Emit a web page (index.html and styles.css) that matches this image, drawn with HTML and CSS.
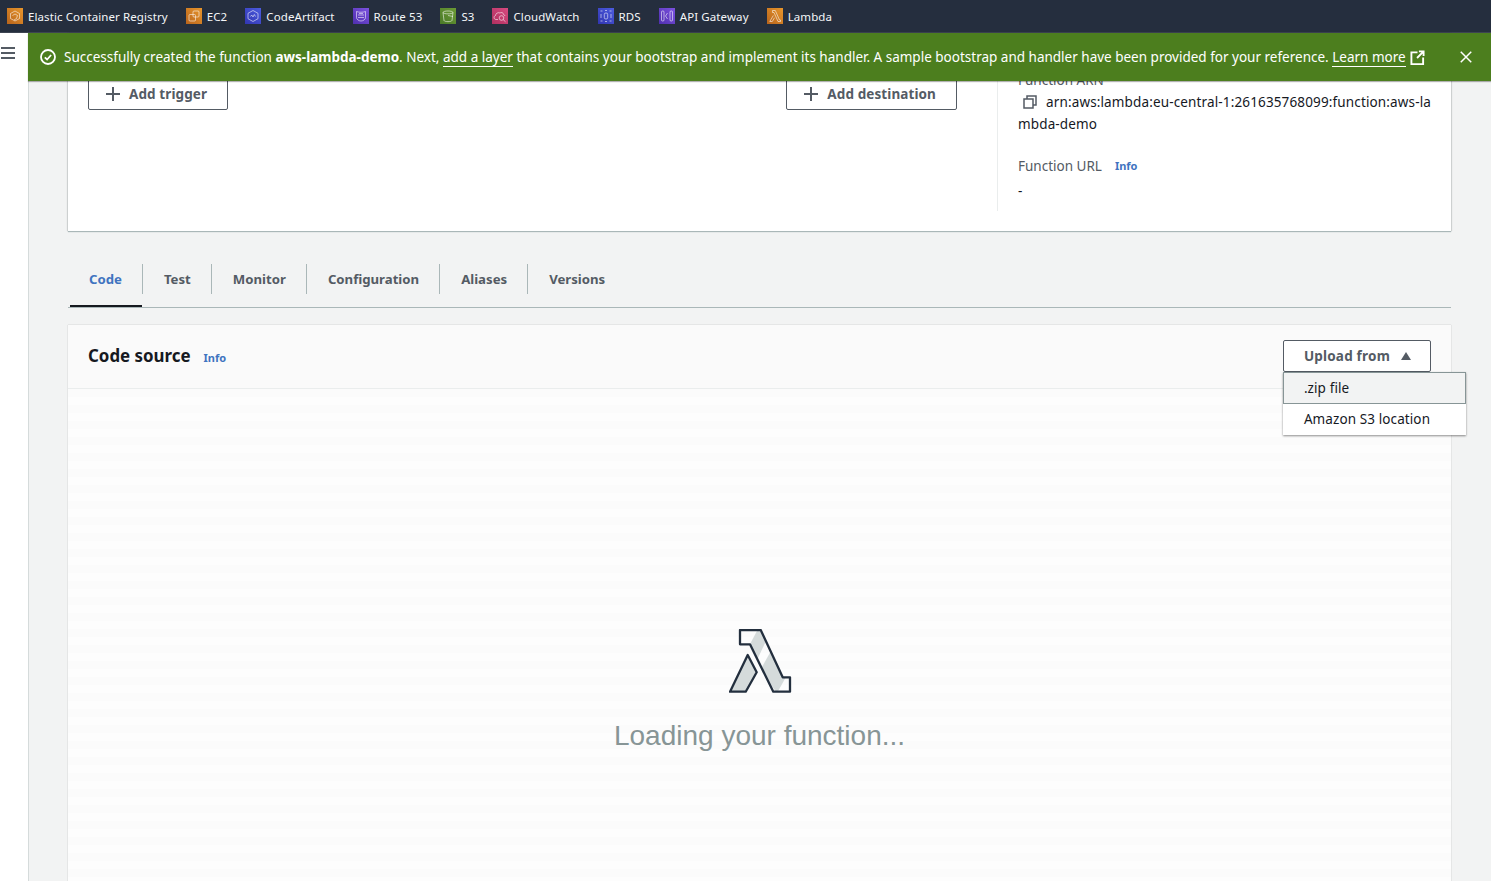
FILE: index.html
```html
<!DOCTYPE html>
<html lang="en">
<head>
<meta charset="utf-8">
<title>Lambda</title>
<link rel="stylesheet" href="styles.css">
</head>
<body>
<nav class="topnav">
  <a class="fav"><span class="ico orange"><svg viewBox="0 0 16 16"><path d="M8 3l4.500 2.500v5L8 13l-4.500-2.500v-5z"/><path d="M5.500 7.500L8 6l2.500 1.500-1 3L7 12"/></svg></span>Elastic Container Registry</a>
  <a class="fav"><span class="ico orange"><svg viewBox="0 0 16 16"><rect x="7" y="3" width="6" height="6" rx="1"/><rect x="3" y="6.500" width="6.500" height="6.500" rx="1"/></svg></span>EC2</a>
  <a class="fav"><span class="ico blue"><svg viewBox="0 0 16 16"><path d="M8 2.500l5 2.800v5.400l-5 2.800-5-2.800V5.300z"/><path d="M5.500 8.500l1.200-1.500 1.300 2 1.300-2.500 1.200 2"/></svg></span>CodeArtifact</a>
  <a class="fav"><span class="ico purple"><svg viewBox="0 0 16 16"><path d="M3.500 3.500c2.500 1 6.500 1 9 0v6c0 2-2.500 3.500-4.500 3.500s-4.500-1.500-4.500-3.500z"/><path d="M5 7h6M5 9.500h6M6 5.500h4"/></svg></span>Route 53</a>
  <a class="fav"><span class="ico green"><svg viewBox="0 0 16 16"><path d="M3 4.500c0-2 10-2 10 0l-1 8c-.500 1.500-7.500 1.500-8 0z"/><path d="M3 4.500c1 1.800 9 1.800 10 0M8 7.500l5 1"/></svg></span>S3</a>
  <a class="fav"><span class="ico pink"><svg viewBox="0 0 16 16"><path d="M6 11.500H4c-2.500 0-2.500-3.500-.5-4 0-2 2.500-3.500 4.500-2.500 1-1 3.500-.5 3.500 1.500 1 .300 1.500 1 1.500 1.500"/><circle cx="9.500" cy="10" r="2.300"/><path d="M11.200 11.700l2.300 2"/></svg></span>CloudWatch</a>
  <a class="fav"><span class="ico blue"><svg viewBox="0 0 16 16"><rect x="6.300" y="5" width="3.400" height="6" rx="1.500"/><path d="M2.500 3h2M2.500 13h2M11.500 3h2M11.500 13h2M3 6v4M13 6v4M7 2.500h2M7 13.500h2"/></svg></span>RDS</a>
  <a class="fav"><span class="ico purple"><svg viewBox="0 0 16 16"><rect x="2.500" y="3" width="2.500" height="10" rx="1"/><rect x="11" y="3" width="2.500" height="10" rx="1"/><path d="M8.500 5L6.500 8l2 3"/></svg></span>API Gateway</a>
  <a class="fav"><span class="ico orange"><svg viewBox="0 0 16 16"><path d="M5.500 2.500h2.800l4.200 9.500h1v1.500h-2.500L7 4.500H5.500z"/><path d="M6.300 7.500L2.800 13.500h2.500l2.200-3.800"/></svg></span>Lambda</a>
</nav>

<div class="shell">
  <aside class="rail">
    <button class="burger" aria-label="Open menu"><i></i><i></i><i></i></button>
  </aside>
  <main class="main">
    <div class="flash">
      <svg class="flash-ok" viewBox="0 0 16 16"><circle cx="8" cy="8" r="7"/><path d="M4.800 8.300l2.300 2.200 4-4.500"/></svg>
      <p class="flash-text">Successfully created the function <b>aws-lambda-demo</b>. Next, <a>add a layer</a> that contains your bootstrap and implement its handler. A sample bootstrap and handler have been provided for your reference. <a>Learn more</a></p>
      <svg class="flash-ext" viewBox="0 0 16 16"><path d="M8 2.500H1.500V15H14V8"/><path d="M9.500 1.500h5v5M14.500 1.500L7.500 8.500"/></svg>
      <svg class="flash-close" viewBox="0 0 16 16"><path d="M2 2l12 12M14 2L2 14"/></svg>
    </div>

    <section class="overview">
      <div class="diagram">
        <button class="btn"><svg class="plus" viewBox="0 0 14 14"><path d="M7 0v14M0 7h14"/></svg>Add trigger</button>
        <button class="btn"><svg class="plus" viewBox="0 0 14 14"><path d="M7 0v14M0 7h14"/></svg>Add destination</button>
      </div>
      <div class="meta">
        <div class="meta-label">Function ARN</div>
        <div class="arn"><svg class="copy" viewBox="0 0 14 14"><path d="M1 4h9v9H1z"/><path d="M4 4V1h9v9h-3"/></svg>arn:aws:lambda:eu-central-1:261635768099:function:aws-lambda-demo</div>
        <div class="meta-label url">Function URL <a class="info">Info</a></div>
        <div class="meta-value">-</div>
      </div>
    </section>

    <div class="tabs">
      <a class="tab active">Code</a>
      <a class="tab">Test</a>
      <a class="tab">Monitor</a>
      <a class="tab">Configuration</a>
      <a class="tab">Aliases</a>
      <a class="tab">Versions</a>
    </div>

    <section class="panel">
      <header class="panel-head">
        <h2 class="panel-title">Code source</h2>
        <a class="info">Info</a>
        <div class="upload">
          <button class="btn upload-btn">Upload from<svg class="caret" viewBox="0 0 10 8"><path d="M5 0l5 8H0z"/></svg></button>
          <ul class="menu">
            <li class="menu-item hover">.zip file</li>
            <li class="menu-item">Amazon S3 location</li>
          </ul>
        </div>
      </header>
      <div class="panel-body">
        <svg class="lambda" viewBox="0 0 64 64">
          <defs>
            <clipPath id="lam-a"><path d="M11 1h20.700l22 47.300H61v14.400H44.300L21 15.300H11z"/></clipPath>
            <clipPath id="lam-b"><path d="M18.700 26l9 17.300-11 19.400H1z"/></clipPath>
          </defs>
          <g clip-path="url(#lam-a)" class="lam-fill">
            <path d="M20 17L29 0h6l3 10-10 21z"/>
            <path d="M33 38l10-18 14 28-9 16-6-8z"/>
          </g>
          <g clip-path="url(#lam-b)" class="lam-fill">
            <path d="M0 64L20 22l12 16-17 26z"/>
          </g>
          <path class="lam-line" d="M11 1h20.700l22 47.300H61v14.400H44.300L21 15.300H11z"/>
          <path class="lam-line" d="M18.700 26l9 17.300-11 19.400H1z"/>
        </svg>
        <p class="loading">Loading your function...</p>
      </div>
    </section>
  </main>
</div>
</body>
</html>
```
FILE: styles.css
```css
* { box-sizing: border-box; }
html, body { margin: 0; height: 881px; overflow: hidden; }
body { font-family: "Noto Sans", sans-serif; font-size: 14px; color: #16191f; background: #f2f3f3; }

.topnav { height: 33px; background: #252e3e; display: flex; align-items: center; padding: 0 0 0 7px; gap: 18px; border-bottom: 1px solid #3d4452; }
.fav { display: flex; align-items: center; gap: 5px; font-size: 11.500px; letter-spacing: .1px; color: #f4f6f8; white-space: nowrap; }
.ico { width: 16px; height: 16px; display: block; }
.ico svg { display: block; width: 16px; height: 16px; fill: none; stroke: rgba(255,255,255,.7); stroke-width: .8; }
.orange { background: linear-gradient(45deg, #b8641c, #e8962c); }
.blue { background: linear-gradient(45deg, #3135b0, #4c5ce0); }
.purple { background: linear-gradient(45deg, #4f2fae, #7c52e0); }
.green { background: linear-gradient(45deg, #4a7a28, #6c9a35); }
.pink { background: linear-gradient(45deg, #b0305f, #d84a80); }

.shell { display: flex; height: 848px; }
.rail { width: 29px; flex: none; background: #fff; border-right: 1px solid #d5dbdb; }
.burger { display: flex; flex-direction: column; gap: 3px; width: 14px; margin: 14px 0 0 1px; padding: 0; border: 0; background: none; }
.burger i { display: block; height: 2px; background: #545b64; }

.main { position: relative; flex: 1; padding: 0 40px 0 39px; min-width: 0; }
.flash { position: absolute; z-index: 3; top: 0; left: -1px; right: 0; height: 48px; background: #4c7e1e; color: #fff; display: flex; align-items: center; padding-left: 12px; box-shadow: 0 1px 1px rgba(0,0,0,.3); }
.flash-ok { width: 16px; height: 16px; flex: none; fill: none; stroke: #fff; stroke-width: 1.800; margin-right: 8px; }
.flash-text { margin: 0; font-size: 13.500px; white-space: nowrap; }
.flash-text a { border-bottom: 1px solid #fff; }
.flash-ext { width: 15px; height: 15px; flex: none; fill: none; stroke: #fff; stroke-width: 2; margin-left: 4px; }
.flash-close { width: 14px; height: 14px; flex: none; fill: none; stroke: #fff; stroke-width: 1.700; margin-left: 34px; }

.overview { display: flex; height: 198px; background: #fff; box-shadow: 0 1px 1px #aab7b8, 1px 0 1px rgba(0,0,0,.12), -1px 0 1px rgba(0,0,0,.12); }
.diagram { flex: none; width: 929px; display: flex; justify-content: space-between; align-items: flex-start; padding: 45px 40px 0 20px; }
.btn { display: inline-flex; align-items: center; height: 32px; padding: 0 20px 0 17px; background: #fff; border: 1px solid #545b64; border-radius: 2px; font: 700 13.500px "Noto Sans", sans-serif; letter-spacing: .1px; color: #545b64; white-space: nowrap; }
.plus { width: 14px; height: 14px; flex: none; fill: none; stroke: #545b64; stroke-width: 2; margin-right: 9px; }
.meta { flex: 1; height: 178px; border-left: 1px solid #eaeded; padding: 37px 15px 0 20px; font-size: 13.500px; min-width: 0; }
.meta-label { color: #545b64; line-height: 20px; }
.url { margin-top: 21px; display: flex; align-items: center; gap: 13px; }
.arn { line-height: 22px; margin-top: 1px; word-break: break-all; letter-spacing: .14px; }
.copy { width: 14px; height: 14px; fill: none; stroke: #545b64; stroke-width: 1.500; margin: 0 9px -2px 5px; }
.meta-value { margin-top: 5px; line-height: 20px; }
.info { color: #3f74c0; font-size: 11px; font-weight: 700; }

.tabs { display: flex; height: 43px; margin-top: 33px; padding-left: 2px; border-bottom: 1px solid #aab7b8; box-sizing: content-box; }
.tab { display: flex; align-items: center; position: relative; height: 30px; padding: 0 20px 0 21px; font-size: 13.200px; font-weight: 700; color: #545b64; border-left: 1px solid #aab7b8; }
.tab:first-child { border-left: 0; padding: 0 20px 0 19px; }
.tab.active { color: #3f74c0; }
.tab.active::after { content: ""; position: absolute; left: 0; right: 0; top: 41px; height: 2px; background: #16191f; }

.panel { margin-top: 17px; background: #fff; box-shadow: 0 0 1px rgba(0,0,0,.3); height: 600px; }
.panel-head { height: 64px; display: flex; align-items: center; padding: 0 20px 1px; background: #fafafa; border-bottom: 1px solid #eaeded; position: relative; }
.panel-title { margin: 0 13px 1px 0; font-size: 16.900px; font-weight: 700; color: #16191f; line-height: 22px; }
.panel-head .info { margin-top: 2px; }
.upload { margin-left: auto; position: relative; }
.upload-btn { padding: 0 19px 0 20px; height: 32px; letter-spacing: .2px; }
.caret { width: 10px; height: 8px; fill: #545b64; margin-left: 11px; }
.menu { position: absolute; z-index: 2; top: 32px; left: 0; width: 183px; margin: 0; padding: 0; list-style: none; background: #fff; box-shadow: 0 1px 2px rgba(0,0,0,.45); }
.menu-item { height: 31px; line-height: 28px; padding: 0 20px; font-size: 13.500px; letter-spacing: .1px; border: 1px solid transparent; white-space: nowrap; }
.menu-item.hover { height: 32px; line-height: 30px; background: #f2f3f3; border-color: #879596; }

.panel-body { height: 536px; display: flex; flex-direction: column; align-items: center; padding-top: 240px; background: repeating-linear-gradient(to bottom, #fbfbfb 0 8px, #fdfdfd 8px 16px); }
.lambda { width: 64px; height: 64px; display: block; margin-left: 2px; }
.lam-fill { fill: #d5dbdb; }
.lam-line { fill: none; stroke: #232f3e; stroke-width: 2.300; stroke-linejoin: round; }
.loading { margin: 25px 0 0; font: 28px "Liberation Sans", Arial, sans-serif; color: #879596; line-height: 36px; }
```
